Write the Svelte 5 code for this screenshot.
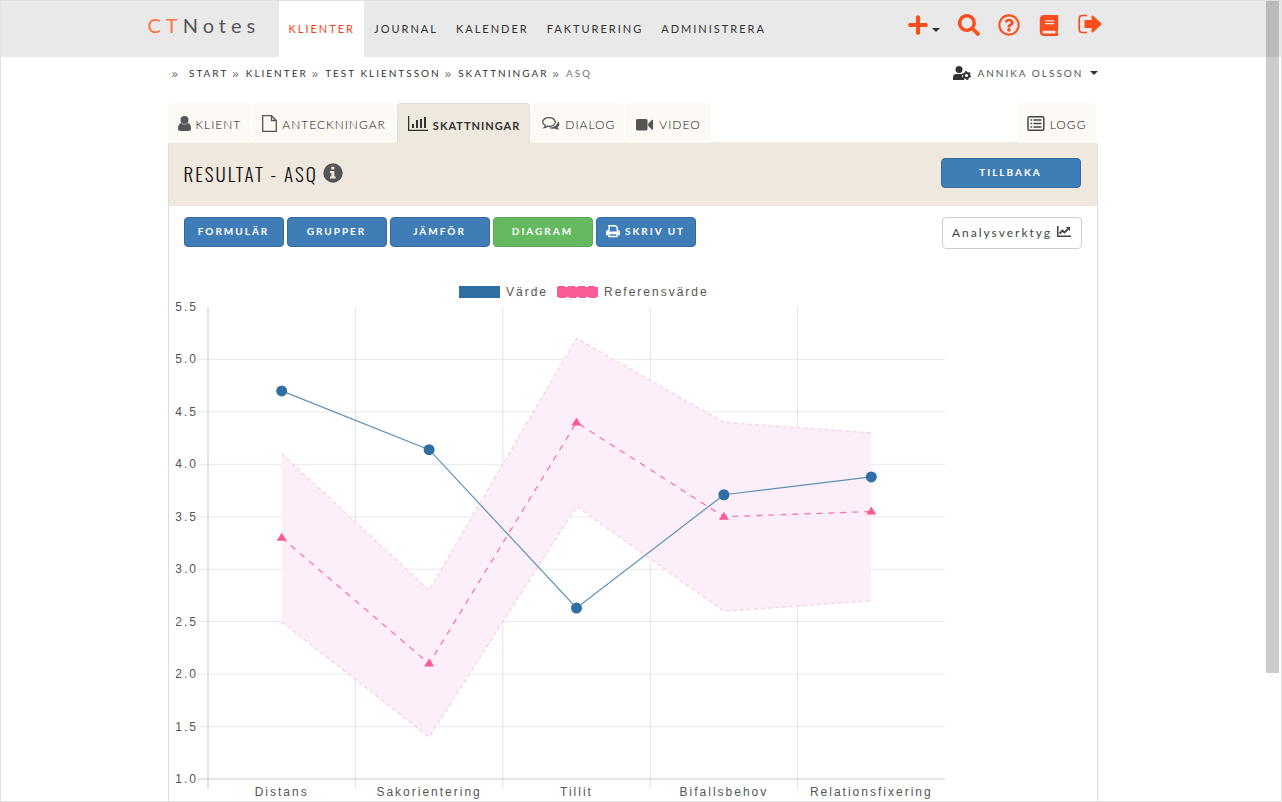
<style>
  :global(body) {
    background: white;
  }

  .page {
    position: relative;
    box-sizing: border-box;
    height: 100vh;
    overflow: hidden;
    border: 1px solid #e0e0e0;
    font-family: Lato, "Open Sans", sans-serif;
    font-size: 11px;
    letter-spacing: 2px;
    color: #333;
  }

  .scroll-thumb {
    position: absolute;
    top: 0;
    right: 2px;
    width: 13px;
    height: 84%;
    background: rgba(0, 0, 0, 0.2);
  }

  a {
    color: inherit;
    text-decoration: none;
  }

  svg {
    display: block;
    flex: none;
  }

  header {
    background: #e9e9e9;
    padding-right: 15px;
  }

  .top {
    display: flex;
    max-width: 972px;
    height: 56px;
    margin: 0 auto;
  }

  .brand {
    width: 131px;
    box-sizing: border-box;
    font-size: 20px;
    line-height: 48px;
    letter-spacing: 5px;
    color: #555;
  }

  .brand span {
    color: #ff7043;
  }

  nav {
    display: flex;
    flex: 1;
  }

  nav a {
    padding: 0 8px 0 10px;
    line-height: 56px;
  }

  nav a.active {
    padding-right: 9px;
    background: white;
    color: #f9451b;
  }

  .tools {
    display: flex;
    align-items: center;
    height: 48px;
    gap: 18px;
    padding-right: 18px;
    color: #fa4e1c;
  }

  .icon-button {
    display: flex;
    align-items: center;
    gap: 4px;
    padding: 0;
    border: 0;
    background: none;
    color: inherit;
    font: inherit;
    letter-spacing: inherit;
    cursor: pointer;
  }

  .caret {
    border: 4px solid transparent;
    border-top-color: #333;
    border-bottom: 0;
  }

  .tools .caret {
    margin-top: 10px;
  }

  main {
    max-width: 930px;
    margin: 0 auto;
    padding: 0 17px 0 0;
  }

  .crumbs {
    display: flex;
    justify-content: space-between;
    align-items: center;
    height: 32px;
    font-size: 10px;
  }

  .crumbs ol {
    display: flex;
    align-items: center;
    margin: 0;
    padding: 0 0 0 4px;
    line-height: 14px;
    list-style: none;
  }

  .crumbs .sep {
    padding: 0 5px 0 4px;
    font-family: "Open Sans", sans-serif;
    font-size: 13px;
    color: #777;
  }

  .crumbs .sep.first {
    padding: 0 9px 0 0;
  }

  .crumbs .current {
    color: #777;
  }

  .user {
    color: #555;
    gap: 6px;
  }

  .tabs {
    display: flex;
    gap: 2px;
    margin-top: 14px;
    padding-right: 2px;
  }

  .tabs a {
    display: flex;
    align-items: center;
    gap: 5px;
    box-sizing: border-box;
    height: 40px;
    padding: 3px 9px 0 10px;
    margin-bottom: -1px;
    border-radius: 4px 4px 0 0;
    background: #fdf9f4;
    font-size: 12px;
    font-weight: 300;
    letter-spacing: 1px;
    color: #111;
  }

  .tabs a.active {
    position: relative;
    border: 1px solid #ddd;
    border-bottom: 0;
    background: #efe8df;
    font-size: 11px;
    font-weight: 700;
    color: #333;
  }

  .tabs .log {
    margin-left: auto;
  }

  .panel {
    border: 1px solid #ddd;
    border-top-color: #efe8df;
    border-radius: 4px 4px 0 0;
  }

  .panel-head {
    display: flex;
    align-items: center;
    justify-content: space-between;
    box-sizing: border-box;
    height: 63px;
    padding: 0 16px 3px 15px;
    background: #efe8df;
  }

  h1 {
    display: flex;
    align-items: center;
    gap: 5px;
    margin: 0;
    font-family: Oswald, "Liberation Sans Narrow", sans-serif;
    font-size: 19px;
    font-weight: 300;
    color: #111;
  }

  .actions {
    display: flex;
    align-items: flex-start;
    gap: 3px;
    padding: 11px 15px 0;
  }

  .btn {
    display: flex;
    align-items: center;
    justify-content: center;
    gap: 5px;
    box-sizing: border-box;
    width: 100px;
    height: 30px;
    padding: 0 0 2px;
    border: 1px solid #356a9e;
    border-radius: 4px;
    background: #3f7db6;
    color: white;
    font-family: inherit;
    font-size: 10px;
    font-weight: 700;
    letter-spacing: 2px;
    cursor: pointer;
  }

  .btn.green {
    background: #65b961;
    border-color: #58a954;
  }

  .btn.wide {
    width: 140px;
  }

  .btn.plain {
    height: 32px;
    margin-left: auto;
    border-color: #ccc;
    background: white;
    color: #444;
    font-size: 12px;
    font-weight: 400;
  }

  .chart {
    width: 100%;
    max-width: 786px;
    margin-top: 34px;
    font-family: "Liberation Sans", Arial, sans-serif;
    font-size: 12px;
    letter-spacing: 2px;
  }

  .chart text {
    fill: #555;
  }
</style>

<script lang="ts">
  const menu = ["KLIENTER", "JOURNAL", "KALENDER", "FAKTURERING", "ADMINISTRERA"];
  const crumbs = ["START", "KLIENTER", "TEST KLIENTSSON", "SKATTNINGAR"];

  const labels = ["Distans", "Sakorientering", "Tillit", "Bifallsbehov", "Relationsfixering"];
  const values = [4.7, 4.14, 2.63, 3.71, 3.88];
  const reference = [3.3, 2.1, 4.4, 3.5, 3.55];
  const upper = [4.1, 2.8, 5.2, 4.4, 4.3];
  const lower = [2.5, 1.4, 3.6, 2.6, 2.7];
  const ticks = [5.5, 5, 4.5, 4, 3.5, 3, 2.5, 2, 1.5, 1];

  const left = 39;
  const right = 776;
  const top = 24;
  const bottom = 496;
  const step = (right - left) / labels.length;

  const x = (i: number) => left + step * (i + 0.5);
  const y = (v: number) => bottom - ((v - 1) / 4.5) * (bottom - top);
  const points = (data: number[]) => data.map((v, i) => `${x(i)},${y(v)}`);

  const band = [...points(upper), ...points(lower).reverse()].join(" ");
</script>

<div class="page">
  <header>
    <div class="top">
      <a class="brand" href="#start"><span>CT</span>Notes</a>
      <nav>
        {#each menu as item, i}
          <a href="#{item.toLowerCase()}" class:active={i === 0}>{item}</a>
        {/each}
      </nav>
      <div class="tools">
        <button class="icon-button" aria-label="Lägg till">
          <svg width="20" height="22" viewBox="0 0 448 512" fill="currentColor"><path d="M416 208H272V64c0-17.670-14.330-32-32-32h-32c-17.670 0-32 14.330-32 32v144H32c-17.670 0-32 14.330-32 32v32c0 17.670 14.330 32 32 32h144v144c0 17.670 14.330 32 32 32h32c17.670 0 32-14.330 32-32V304h144c17.670 0 32-14.330 32-32v-32c0-17.670-14.330-32-32-32z" /></svg>
          <span class="caret"></span>
        </button>
        <button class="icon-button" aria-label="Sök">
          <svg width="22" height="22" viewBox="0 0 512 512" fill="currentColor"><path d="M505 442.700L405.300 343c-4.500-4.500-10.600-7-17-7H372c27.600-35.300 44-79.700 44-128C416 93.100 322.900 0 208 0S0 93.100 0 208s93.100 208 208 208c48.300 0 92.700-16.400 128-44v16.300c0 6.400 2.500 12.500 7 17l99.700 99.700c9.400 9.400 24.600 9.400 33.900 0l28.300-28.300c9.400-9.400 9.400-24.600.1-34zM208 336c-70.700 0-128-57.200-128-128 0-70.700 57.200-128 128-128 70.700 0 128 57.200 128 128 0 70.700-57.200 128-128 128z" /></svg>
        </button>
        <a href="#hjalp" aria-label="Hjälp">
          <svg width="22" height="22" viewBox="0 0 512 512" fill="currentColor"><path d="M256 8C119.043 8 8 119.083 8 256c0 136.997 111.043 248 248 248s248-111.003 248-248C504 119.083 392.957 8 256 8zm0 448c-110.532 0-200-89.431-200-200 0-110.495 89.472-200 200-200 110.491 0 200 89.471 200 200 0 110.530-89.431 200-200 200zm107.244-255.200c0 67.052-72.421 68.084-72.421 92.863V300c0 6.627-5.373 12-12 12h-45.647c-6.627 0-12-5.373-12-12v-8.659c0-35.745 27.100-50.034 47.579-61.516 17.561-9.845 28.324-16.541 28.324-29.579 0-17.246-21.999-28.693-39.784-28.693-23.189 0-33.894 10.977-48.942 29.969-4.057 5.120-11.460 6.071-16.666 2.124l-27.824-21.098c-5.107-3.872-6.251-11.066-2.644-16.363C184.846 131.491 214.940 112 261.794 112c49.071 0 101.450 38.304 101.450 88.800zM298 368c0 23.159-18.841 42-42 42s-42-18.841-42-42 18.841-42 42-42 42 18.841 42 42z" /></svg>
        </a>
        <a href="#manual" aria-label="Manual">
          <svg width="22" height="21" viewBox="-32 0 512 512" fill="currentColor"><path d="M448 360V24c0-13.300-10.700-24-24-24H96C43 0 0 43 0 96v320c0 53 43 96 96 96h328c13.300 0 24-10.700 24-24v-16c0-7.500-3.500-14.300-8.900-18.700-4.200-15.400-4.200-59.300 0-74.700 5.400-4.300 8.900-11.100 8.900-18.600zM128 134c0-3.300 2.700-6 6-6h212c3.300 0 6 2.700 6 6v20c0 3.300-2.700 6-6 6H134c-3.300 0-6-2.700-6-6v-20zm0 64c0-3.300 2.700-6 6-6h212c3.300 0 6 2.700 6 6v20c0 3.300-2.700 6-6 6H134c-3.300 0-6-2.700-6-6v-20zm253.400 250H96c-17.700 0-32-14.300-32-32 0-17.600 14.400-32 32-32h285.400c-1.900 17.100-1.900 46.900 0 64z" /></svg>
        </a>
        <a href="#logga-ut" aria-label="Logga ut">
          <svg width="24" height="22" viewBox="0 0 24 22"><path d="M9 1.500H4.500Q1.200 1.500 1.200 5v10q0 3.500 3.300 3.500H9" fill="none" stroke="currentColor" stroke-width="1.700" /><path d="M6.500 6.500Q6.500 6 7 6H13.500V2.200Q13.700 1 14.800 1.600L23.300 9.300Q24 10 23.300 10.700L14.800 18.400Q13.700 19 13.500 17.800V14H7Q6.500 14 6.500 13.500z" fill="currentColor" /></svg>
        </a>
      </div>
    </div>
  </header>

  <main>
    <div class="crumbs">
      <ol>
        {#each crumbs as crumb, i}
          <li class="sep" class:first={i === 0}>»</li>
          <li><a href="#{crumb.toLowerCase()}">{crumb}</a></li>
        {/each}
        <li class="sep">»</li>
        <li class="current">ASQ</li>
      </ol>
      <button class="icon-button user">
        <svg width="18" height="14" viewBox="0 0 18 14" fill="#333"><circle cx="6" cy="3.500" r="3.500" /><path d="M0 14v-2.500Q0 8 3.500 8H8.800Q8.600 11.500 11.500 14z" /><circle cx="13.500" cy="9.500" r="2.600" fill="none" stroke="#333" stroke-width="2" /><circle cx="13.500" cy="9.500" r="3.900" fill="none" stroke="#333" stroke-width="1.200" stroke-dasharray="2 2.080" /></svg>
        <span>ANNIKA OLSSON</span>
        <span class="caret"></span>
      </button>
    </div>

    <div class="tabs">
      <a href="#klient">
        <svg width="13" height="18" viewBox="0 0 13 18" fill="#555"><circle cx="6.500" cy="4" r="4" /><path d="M3 7Q6.500 10 10 7Q13 8 13 12.500Q13 15 10.500 15H2.500Q0 15 0 12.500Q0 8 3 7z" /></svg>
        KLIENT
      </a>
      <a href="#anteckningar">
        <svg width="15" height="22" viewBox="0 0 15 22" fill="none" stroke="#555" stroke-width="1.300"><path d="M.7 1.700H9.500L14.300 6.500V17.300H.7zM9.500 1.700V6.500H14.300" /></svg>
        ANTECKNINGAR
      </a>
      <a class="active" href="#skattningar">
        <svg width="20" height="20" viewBox="0 0 20 20" fill="#333"><path d="M0 1h1.300v13.700H20V16H0zM4 9h2v4H4zM8 5h2v8H8zM12 4h2v9h-2zM16 2h2v11h-2z" /></svg>
        SKATTNINGAR
      </a>
      <a href="#dialog">
        <svg width="18" height="18" viewBox="0 0 18 18"><path d="M16 5.200Q19 8.500 15.500 11.300Q16 12.800 17.400 13.400Q14.500 13.700 13 12.400Q9.500 13.200 6.800 11.700Q15 11.500 16 5.200z" fill="#555" /><path d="M7 1.600C10.500 1.600 13.200 3.500 13.200 6S10.500 10.400 7 10.400L5.300 10.200Q3.800 11.500 2.200 11.700Q3.300 10.700 3.300 9.400Q.7 8.200.7 6C.7 3.500 3.500 1.600 7 1.600z" fill="none" stroke="#555" stroke-width="1.300" /></svg>
        DIALOG
      </a>
      <a href="#video">
        <svg width="18" height="14" viewBox="0 0 18 14" fill="#555"><rect x="0" y="1" width="11.500" height="11.500" rx="1.500" /><path d="M12.200 5.500L15.900 1.900Q17 1.200 17 2.500V11Q17 12.300 15.900 11.600L12.200 8z" /></svg>
        VIDEO
      </a>
      <a class="log" href="#logg">
        <svg width="18" height="20" viewBox="0 0 18 20" fill="none" stroke="#444" stroke-width="1.500"><rect x="1" y="1.700" width="15.800" height="13.600" rx="1.200" /><path d="M3.500 5h1.700M6.500 5h8M3.500 8.500h1.700M6.500 8.500h8M3.500 12h1.700M6.500 12h8" /></svg>
        LOGG
      </a>
    </div>

    <section class="panel">
      <div class="panel-head">
        <h1>
          RESULTAT - ASQ
          <svg width="20" height="20" viewBox="0 0 20 20"><circle cx="10" cy="10" r="9.700" fill="#555" /><path d="M8.300 3.700h3v2.700h-3zM7 8h4.300v5.400h1.400v2H7v-2h1.400v-3.400H7z" fill="#efe8df" /></svg>
        </h1>
        <button class="btn wide">TILLBAKA</button>
      </div>

      <div class="actions">
        <button class="btn">FORMULÄR</button>
        <button class="btn">GRUPPER</button>
        <button class="btn">JÄMFÖR</button>
        <button class="btn green">DIAGRAM</button>
        <button class="btn">
          <svg width="14" height="14" viewBox="0 0 14 14"><path d="M3 7V1.700h6.500l1.700 1.700V7M3 9.500h8v3H3z" fill="none" stroke="white" stroke-width="1.400" /><path d="M2 6h1v1.500h8V6h1q2 0 2 2v3.200h-2.600V9H2.600v2.200H0V8q0-2 2-2z" fill="white" /></svg>
          SKRIV UT
        </button>
        <button class="btn wide plain">
          Analysverktyg
          <svg width="14" height="12" viewBox="0 0 14 12"><path d="M.8 0v10.200H14" fill="none" stroke="#444" stroke-width="1.500" /><path d="M2.500 7.500L5.500 4.500L7.500 6.500L11 3" fill="none" stroke="#444" stroke-width="1.800" /><path d="M8.700 1H13v4.300z" fill="#444" /></svg>
        </button>
      </div>

      <svg class="chart" viewBox="0 0 786 520" role="img" aria-label="Diagram ASQ">
        <rect x="290" y="3" width="41" height="12" fill="#306fa3" />
        <text x="337" y="13">Värde</text>
        <rect x="388" y="4" width="41" height="10" fill="#fa5a96" />
        <rect x="389" y="4" width="39" height="10" fill="none" stroke="#fa5a96" stroke-width="2" stroke-dasharray="7 3" />
        <text x="435" y="13">Referensvärde</text>

        {#each ticks as tick, i}
          {#if i > 0}
            <path d="M{left - 10} {y(tick)}H{right}" stroke="black" stroke-opacity={tick === 1 ? 0.2 : 0.09} />
          {/if}
          <text x={left - 10} y={y(tick) + 4} text-anchor="end">{tick.toFixed(1)}</text>
        {/each}
        {#each labels as label, i}
          <path d="M{left + step * i} {top}V{bottom + 10}" stroke="black" stroke-opacity={i === 0 ? 0.22 : 0.11} />
          <text x={x(i)} y="513" text-anchor="middle">{label}</text>
        {/each}

        <polygon points={band} fill="#fdeff9" />
        <g fill="none">
          <polyline points={points(upper).join(" ")} stroke="#fbcfe2" stroke-width="1.300" stroke-dasharray="4 3" />
          <polyline points={points(lower).join(" ")} stroke="#fbcfe2" stroke-width="1.300" stroke-dasharray="4 3" />
          <polyline points={points(reference).join(" ")} stroke="#fa6ea3" stroke-width="1.200" stroke-dasharray="6 6" />
          <polyline points={points(values).join(" ")} stroke="#5c91ba" stroke-width="1.200" />
        </g>
        {#each reference as v, i}
          <path d="M{x(i)} {y(v) - 5}l5 8h-10z" fill="#fa5a96" />
        {/each}
        {#each values as v, i}
          <circle cx={x(i)} cy={y(v)} r="5.500" fill="#306fa3" />
        {/each}
      </svg>
    </section>
  </main>

  <div class="scroll-thumb"></div>
</div>
